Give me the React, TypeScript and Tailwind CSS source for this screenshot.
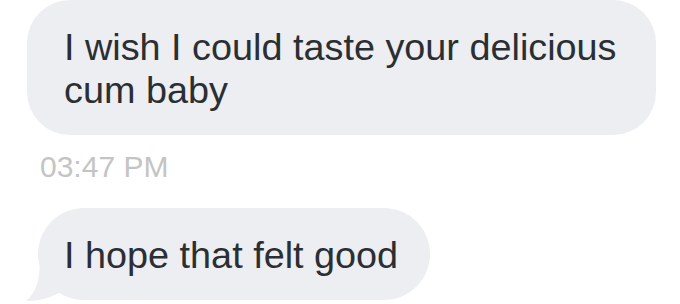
const bubbleText = "text-[37.8px] leading-[43px] text-[#2b2f33] font-['Liberation_Sans',Arial,sans-serif]";

function Tail() {
  return (
    <svg
      className="absolute left-[-14px] top-[50px]"
      width="50"
      height="46"
      viewBox="0 0 50 46"
    >
      <path d="M16 0 C16 20 13 34 2 43 C15 43 27 40 38 33 L42 0 Z" fill="#eceef1" />
    </svg>
  );
}

export default function App() {
  return (
    <div className="w-[680px] h-[304px] overflow-hidden bg-white flex flex-col">
      <div className={`ml-[27px] w-[629px] h-[135px] shrink-0 rounded-[43px] bg-[#eceef1] pl-[37px] pr-[36px] pt-[26px] ${bubbleText}`}>
        I wish I could taste your delicious cum baby
      </div>

      <div className="ml-[40px] mt-[15px] text-[30px] leading-[33px] text-[#c4c4c4] font-['Liberation_Sans',Arial,sans-serif]">
        03:47 PM
      </div>

      <div className={`relative ml-[38px] mt-[25px] w-[392px] h-[92px] shrink-0 rounded-full bg-[#eceef1] pl-[26px] pt-[26px] ${bubbleText}`}>
        <Tail />
        <span className="relative">I hope that felt good</span>
      </div>
    </div>
  );
}
